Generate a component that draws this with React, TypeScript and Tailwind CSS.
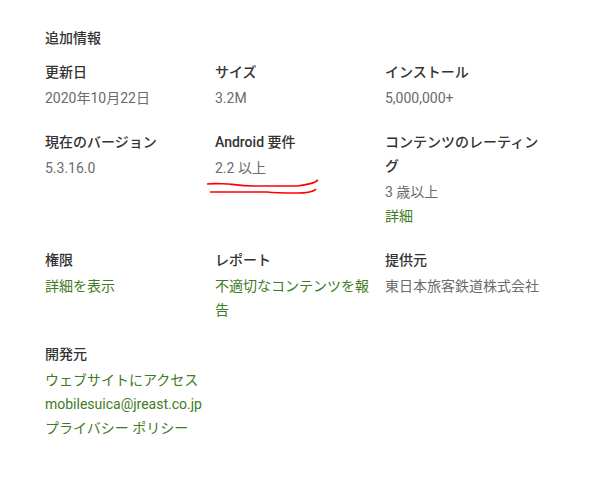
import type { ReactNode } from "react";

const font = { fontFamily: 'Roboto, "Noto Sans CJK JP", sans-serif' };

function Info({ label, children }: { label: string; children: ReactNode }) {
  return (
    <div className="mb-5 w-[170px] pr-3">
      <div className="mb-[2px] text-[14px] leading-6 font-medium text-[#333333]">{label}</div>
      <div className="text-[14px] leading-6 text-[#6b6b6b]">{children}</div>
    </div>
  );
}

function A({ children }: { children: ReactNode }) {
  return <div className="text-[#3f7a25]">{children}</div>;
}

export default function App() {
  return (
    <div className="min-h-[477px] w-[605px] bg-white pt-[26px] pl-[45px]" style={font}>
      <h2 className="mb-[10px] text-[14px] leading-6 font-medium text-[#333333]">追加情報</h2>

      <div className="flex">
        <Info label="更新日">2020年10月22日</Info>
        <Info label="サイズ">3.2M</Info>
        <Info label="インストール">5,000,000+</Info>
      </div>

      <div className="flex">
        <Info label="現在のバージョン">5.3.16.0</Info>
        <div className="relative">
          <Info label="Android 要件">2.2 以上</Info>
          {/* 手書きの赤線 */}
          <svg className="absolute top-[46px] left-[-8px]" width="116" height="22" viewBox="0 0 116 22">
            <path
              d="M0 8 C8 7 16 8 22 8 C30 9 36 10 48 10 C62 10 80 10 90 10 C98 9 104 8 108 6 L111 4"
              stroke="#ff0000"
              strokeWidth="1.6"
              fill="none"
            />
            <path
              d="M3 16 C20 16 40 16 60 16 C68 17 76 17 90 17 C100 17 105 16 108 14 L109 13"
              stroke="#ff0000"
              strokeWidth="1.6"
              fill="none"
            />
          </svg>
        </div>
        <div className="mb-5 w-[170px] pr-3">
          <div className="mb-[2px] text-[14px] leading-6 font-medium text-[#333333]">
            コンテンツのレーティング
          </div>
          <div className="text-[14px] leading-6 text-[#6b6b6b]">
            3 歳以上
            <A>詳細</A>
          </div>
        </div>
      </div>

      <div className="flex">
        <Info label="権限">
          <A>詳細を表示</A>
        </Info>
        <Info label="レポート">
          <A>不適切なコンテンツを報告</A>
        </Info>
        <Info label="提供元">東日本旅客鉄道株式会社</Info>
      </div>

      <div className="flex">
        <Info label="開発元">
          <A>ウェブサイトにアクセス</A>
          <A>mobilesuica@jreast.co.jp</A>
          <A>プライバシー ポリシー</A>
        </Info>
      </div>
    </div>
  );
}
